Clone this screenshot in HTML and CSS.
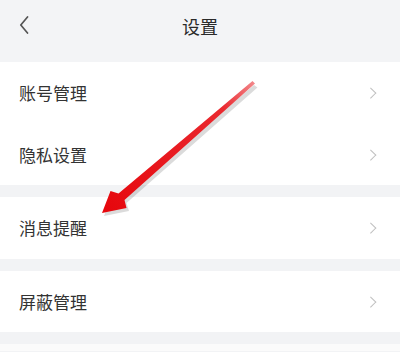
FILE: index.html
```html
<!DOCTYPE html>
<html lang="zh-CN">
<head>
<meta charset="UTF-8">
<meta name="viewport" content="width=device-width, initial-scale=1.0">
<title>设置</title>
<link rel="stylesheet" href="styles.css">
</head>
<body>

<div class="page">
  <div class="header">
    <svg class="back" width="10" height="18" viewBox="0 0 10 18">
      <path d="M8.5 1 L1.8 9 L8.5 17" fill="none" stroke="#555" stroke-width="1.7" stroke-linecap="round" stroke-linejoin="round"/>
    </svg>
    <div class="title">设置</div>
  </div>

  <div class="group">
    <div class="row"><span>账号管理</span><i class="chev"></i></div>
    <div class="row"><span>隐私设置</span><i class="chev"></i></div>
  </div>
  <div class="group">
    <div class="row"><span>消息提醒</span><i class="chev"></i></div>
  </div>
  <div class="group">
    <div class="row"><span>屏蔽管理</span><i class="chev"></i></div>
  </div>
  <div class="tail"></div>

  <!-- red pointer drawn over the list -->
  <svg class="pointer" width="400" height="352" viewBox="0 0 400 352">
    <defs>
      <linearGradient id="red" x1="254" y1="82" x2="102" y2="213" gradientUnits="userSpaceOnUse">
        <stop offset="0" stop-color="#f2878a"/>
        <stop offset="0.2" stop-color="#ea2a30"/>
        <stop offset="1" stop-color="#e6060c"/>
      </linearGradient>
    </defs>
    <polygon points="104,216 112.5,194 120.5,197 254,85 257.5,87.5 126.5,203 129,211" fill="#000" opacity="0.14"/>
    <polygon points="102,213 110.5,191 118.5,193.5 252.5,81 255,83.5 124.5,200 126.5,208" fill="url(#red)"/>
  </svg>
</div>

</body>
</html>
```

FILE: styles.css
```css
body {
  margin: 0;
  background-color: #fff;
  font-family: "Noto Sans CJK SC", "Noto Sans", sans-serif;
  color: #333;
}
.page {
  position: relative;
  width: 400px;
  height: 352px;
  overflow: hidden;
  background-color: #f2f3f5;
}
.header {
  height: 62px;
  background-color: #f3f4f6;
  display: flex;
  align-items: center;
  justify-content: center;
  position: relative;
}
.back {
  position: absolute;
  left: 19px;
  top: 16px;
}
.title {
  font-size: 18px;
  color: #2a2a2a;
  margin-top: -11px;
}
.group {
  background-color: #fff;
  margin-bottom: 12px;
}
.row {
  height: 61.5px;
  display: flex;
  align-items: center;
  justify-content: space-between;
  padding: 0 24px 0 19px;
  font-size: 17px;
  color: #333;
}
.chev {
  width: 6.5px;
  height: 6.5px;
  border-top: 1.5px solid #bfbfbf;
  border-right: 1.5px solid #bfbfbf;
  transform: rotate(45deg);
  margin-right: 2px;
}
.tail {
  height: 7px;
  background-color: #fbfbfb;
}
.pointer {
  position: absolute;
  left: 0;
  top: 0;
}
```
